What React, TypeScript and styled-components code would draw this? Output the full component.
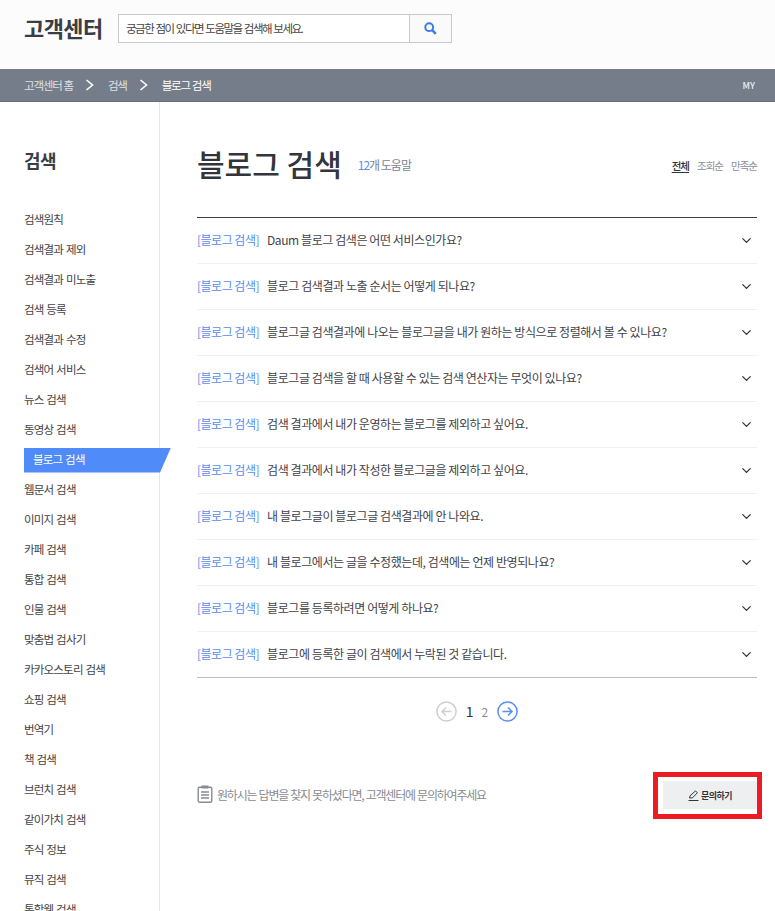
import React from "react";
import styled, { createGlobalStyle } from "styled-components";
import { ChevronDown } from "lucide-react";

const GlobalStyle = createGlobalStyle`
  html, body {
    margin: 0;
    padding: 0;
    height: 911px;
    overflow: hidden;
    background: #fff;
  }
  * { box-sizing: border-box; }
  body {
    font-family: "Noto Sans CJK KR", "Noto Sans", sans-serif;
    color: #333;
  }
`;

const Page = styled.div`
  width: 775px;
  height: 911px;
  overflow: hidden;
`;

const Header = styled.header`
  display: flex;
  align-items: flex-start;
  height: 69px;
  padding: 14px 0 0 24px;
  background: #fcfcfc;
`;
const Logo = styled.h1`
  margin: 0 14px 0 0;
  width: 80px;
  font-size: 22px;
  line-height: 27px;
  font-weight: 700;
  letter-spacing: -0.6px;
  color: #3a3d45;
  white-space: nowrap;
`;
const SearchBox = styled.form`
  display: flex;
  width: 334px;
  height: 29px;
  border: 1px solid #c9c9c9;
  background: #fff;
`;
const SearchInput = styled.div`
  flex: 1;
  padding-left: 7px;
  font-size: 11.5px;
  line-height: 27px;
  letter-spacing: -1.5px;
  word-spacing: 1.15px;
  color: #444;
`;
const SearchButton = styled.div`
  display: flex;
  align-items: center;
  justify-content: center;
  width: 42px;
  border-left: 1px solid #c9c9c9;
  background: #fafafa;
`;

const Breadcrumb = styled.nav`
  display: flex;
  align-items: center;
  height: 33px;
  padding: 0 17px 0 24px;
  background: #747d89;
  border-bottom: 1px solid #686f7a;
  font-size: 11.5px;
  letter-spacing: -1.2px;
  word-spacing: 0.6px;
  color: #dfe2e6;
`;
const Crumb = styled.span<{ $current?: boolean }>`
  color: ${(p) => (p.$current ? "#fff" : "#dfe2e6")};
`;
const CrumbArrow = styled.svg`
  width: 9px;
  height: 12px;
  margin: 0 14px 0 12px;
`;
const MyLink = styled.span`
  margin-left: auto;
  margin-right: 3px;
  font-size: 9px;
  font-weight: 500;
  letter-spacing: 0;
  color: #eceef0;
`;

const Body = styled.div`
  display: flex;
  align-items: stretch;
  height: 809px;
`;
const Sidebar = styled.aside`
  flex: none;
  width: 160px;
  padding: 45px 0 0 24px;
  border-right: 1px solid #e6e6e6;
`;
const SideTitle = styled.h2`
  margin: 0 0 31px;
  font-size: 18px;
  line-height: 26px;
  font-weight: 700;
  letter-spacing: -0.5px;
  color: #3a3d45;
`;
const SideList = styled.ul`
  margin: 0;
  padding: 0;
  list-style: none;
`;
const SideItem = styled.li<{ $active?: boolean }>`
  height: 30px;
  display: flex;
  align-items: center;
  font-size: 11.5px;
  letter-spacing: -0.8px;
  word-spacing: 1px;
  white-space: nowrap;
  color: ${(p) => (p.$active ? "#fff" : "#444")};
`;
const ActivePill = styled.span`
  display: block;
  width: 148px;
  height: 25px;
  margin: 2px -12px 0 0;
  padding-left: 9px;
  line-height: 23px;
  background: #4f8bf9;
  clip-path: polygon(0 0, 100% 0, 136px 100%, 0 100%);
`;

const Main = styled.main`
  flex: 1;
  padding: 0 18px 0 37px;
`;
const TitleRow = styled.div`
  display: flex;
  align-items: flex-start;
  height: 116px;
  padding-top: 39px;
  border-bottom: 1px solid #3d3f45;
`;
const Title = styled.h2`
  margin: 0 16px 0 0;
  font-size: 30px;
  line-height: 44px;
  font-weight: 500;
  letter-spacing: 0;
  color: #33353c;
`;
const Count = styled.span`
  margin-top: 15px;
  font-size: 12px;
  letter-spacing: -1px;
  color: #7c838e;
  em {
    font-style: normal;
    color: #5a8df0;
  }
`;
const Sort = styled.div`
  display: flex;
  gap: 8px;
  margin: 17px 0 0 auto;
  font-size: 10.5px;
  letter-spacing: -1px;
`;
const SortLink = styled.span<{ $active?: boolean }>`
  color: ${(p) => (p.$active ? "#2f3136" : "#8b8f96")};
  font-weight: ${(p) => (p.$active ? 500 : 400)};
  text-decoration: ${(p) => (p.$active ? "underline" : "none")};
  text-underline-offset: 2px;
`;

const Faq = styled.ul`
  margin: 0;
  padding: 0;
  list-style: none;
  border-bottom: 1px solid #bcbcbc;
`;
const FaqRow = styled.li`
  display: flex;
  align-items: center;
  height: 46px;
  padding-bottom: 3px;
  font-size: 12px;
  letter-spacing: -0.42px;
  color: #3f4249;
  &:not(:last-child) {
    border-bottom: 1px solid #f0f0f0;
  }
  &:last-child {
    height: 45px;
    padding-bottom: 2px;
  }
`;
const FaqTag = styled.span`
  flex: none;
  margin-right: 8px;
  letter-spacing: -0.5px;
  color: #5a8df0;
`;
const FaqChevron = styled(ChevronDown)`
  flex: none;
  margin: 2px 3px 0 auto;
  color: #33353c;
`;

const Pager = styled.div`
  display: flex;
  align-items: center;
  justify-content: center;
  gap: 8px;
  height: 66px;
`;
const PageNum = styled.span<{ $current?: boolean }>`
  font-size: ${(p) => (p.$current ? "14px" : "12px")};
  color: ${(p) => (p.$current ? "#33353c" : "#8b8f96")};
`;
const PageArrow = styled.svg<{ $on?: boolean }>`
  width: 21px;
  height: 21px;
  margin: 0 1px;
  color: ${(p) => (p.$on ? "#5a8df0" : "#cfcfcf")};
`;

const Inquiry = styled.div`
  display: flex;
  align-items: flex-start;
  justify-content: space-between;
  margin: 28px -5px 0 0;
`;
const InquiryText = styled.p`
  display: flex;
  align-items: center;
  gap: 4px;
  margin: 13px 0 0;
  font-size: 12px;
  letter-spacing: -1.2px;
  word-spacing: 0.7px;
  color: #878b92;
`;
const Highlight = styled.div`
  width: 109px;
  height: 47px;
  padding: 4px 0 0 5px;
  border: 5px solid #ed1c24;
`;
const InquiryButton = styled.div`
  display: flex;
  align-items: center;
  justify-content: center;
  gap: 2px;
  height: 28px;
  background: #eeeff1;
  font-size: 9px;
  font-weight: 700;
  letter-spacing: -0.5px;
  color: #33353c;
`;

const sideItems = [
  "검색원칙",
  "검색결과 제외",
  "검색결과 미노출",
  "검색 등록",
  "검색결과 수정",
  "검색어 서비스",
  "뉴스 검색",
  "동영상 검색",
  "블로그 검색",
  "웹문서 검색",
  "이미지 검색",
  "카페 검색",
  "통합 검색",
  "인물 검색",
  "맞춤법 검사기",
  "카카오스토리 검색",
  "쇼핑 검색",
  "번역기",
  "책 검색",
  "브런치 검색",
  "같이가치 검색",
  "주식 정보",
  "뮤직 검색",
  "통합웹 검색",
];

const questions = [
  "Daum 블로그 검색은 어떤 서비스인가요?",
  "블로그 검색결과 노출 순서는 어떻게 되나요?",
  "블로그글 검색결과에 나오는 블로그글을 내가 원하는 방식으로 정렬해서 볼 수 있나요?",
  "블로그글 검색을 할 때 사용할 수 있는 검색 연산자는 무엇이 있나요?",
  "검색 결과에서 내가 운영하는 블로그를 제외하고 싶어요.",
  "검색 결과에서 내가 작성한 블로그글을 제외하고 싶어요.",
  "내 블로그글이 블로그글 검색결과에 안 나와요.",
  "내 블로그에서는 글을 수정했는데, 검색에는 언제 반영되나요?",
  "블로그를 등록하려면 어떻게 하나요?",
  "블로그에 등록한 글이 검색에서 누락된 것 같습니다.",
];

const Arrow: React.FC = () => (
  <CrumbArrow viewBox="0 0 9 12" fill="none" stroke="#fff" strokeWidth="1.6">
    <path d="M1.5 1l6 5-6 5" />
  </CrumbArrow>
);

const PagerArrow: React.FC<{ next?: boolean }> = ({ next }) => (
  <PageArrow $on={next} viewBox="0 0 21 21" fill="none" stroke="currentColor" strokeWidth="1.5">
    <circle cx="10.5" cy="10.5" r="9.6" />
    <path d={next ? "M5.5 10.5h9.5M11 6.5l4 4-4 4" : "M15.5 10.5H6M10 6.5l-4 4 4 4"} />
  </PageArrow>
);

const App: React.FC = () => {
  return (
    <Page>
      <GlobalStyle />
      <Header>
        <Logo>고객센터</Logo>
        <SearchBox>
          <SearchInput>궁금한 점이 있다면 도움말을 검색해 보세요.</SearchInput>
          <SearchButton>
            <svg width="13" height="13" viewBox="0 0 13 13" fill="none" stroke="#3f7ee0">
              <circle cx="5.2" cy="5.2" r="3.9" strokeWidth="2" />
              <path d="M8.2 8.2l3.6 3.6" strokeWidth="2.6" />
            </svg>
          </SearchButton>
        </SearchBox>
      </Header>
      <Breadcrumb>
        <Crumb>고객센터 홈</Crumb>
        <Arrow />
        <Crumb>검색</Crumb>
        <Arrow />
        <Crumb $current>블로그 검색</Crumb>
        <MyLink>MY</MyLink>
      </Breadcrumb>
      <Body>
        <Sidebar>
          <SideTitle>검색</SideTitle>
          <SideList>
            {sideItems.map((item) => (
              <SideItem key={item} $active={item === "블로그 검색"}>
                {item === "블로그 검색" ? <ActivePill>{item}</ActivePill> : item}
              </SideItem>
            ))}
          </SideList>
        </Sidebar>
        <Main>
          <TitleRow>
            <Title>블로그 검색</Title>
            <Count>
              <em>12</em>개 도움말
            </Count>
            <Sort>
              <SortLink $active>전체</SortLink>
              <SortLink>조회순</SortLink>
              <SortLink>만족순</SortLink>
            </Sort>
          </TitleRow>
          <Faq>
            {questions.map((q) => (
              <FaqRow key={q}>
                <FaqTag>[블로그 검색]</FaqTag>
                {q}
                <FaqChevron size={15} strokeWidth={2} />
              </FaqRow>
            ))}
          </Faq>
          <Pager>
            <PagerArrow />
            <PageNum $current>1</PageNum>
            <PageNum>2</PageNum>
            <PagerArrow next />
          </Pager>
          <Inquiry>
            <InquiryText>
              <svg width="16" height="18" viewBox="0 0 16 18" fill="none" stroke="#878b92" strokeWidth="1.4">
                <rect x="1.2" y="2.2" width="13.6" height="15" rx="1.5" />
                <rect x="4.5" y="0.5" width="7" height="3" fill="#878b92" stroke="none" />
                <path d="M4 7h8M4 10h8M4 13h8" />
              </svg>
              원하시는 답변을 찾지 못하셨다면, 고객센터에 문의하여주세요
            </InquiryText>
            <Highlight>
              <InquiryButton>
                <svg width="11" height="11" viewBox="0 0 11 11" fill="none" stroke="#33353c" strokeWidth="1">
                  <path d="M1.5 8l.6-2.2L7.5.9l1.9 1.9-5 5.1zM.5 10.5h10" />
                </svg>
                문의하기
              </InquiryButton>
            </Highlight>
          </Inquiry>
        </Main>
      </Body>
    </Page>
  );
};

export default App;
